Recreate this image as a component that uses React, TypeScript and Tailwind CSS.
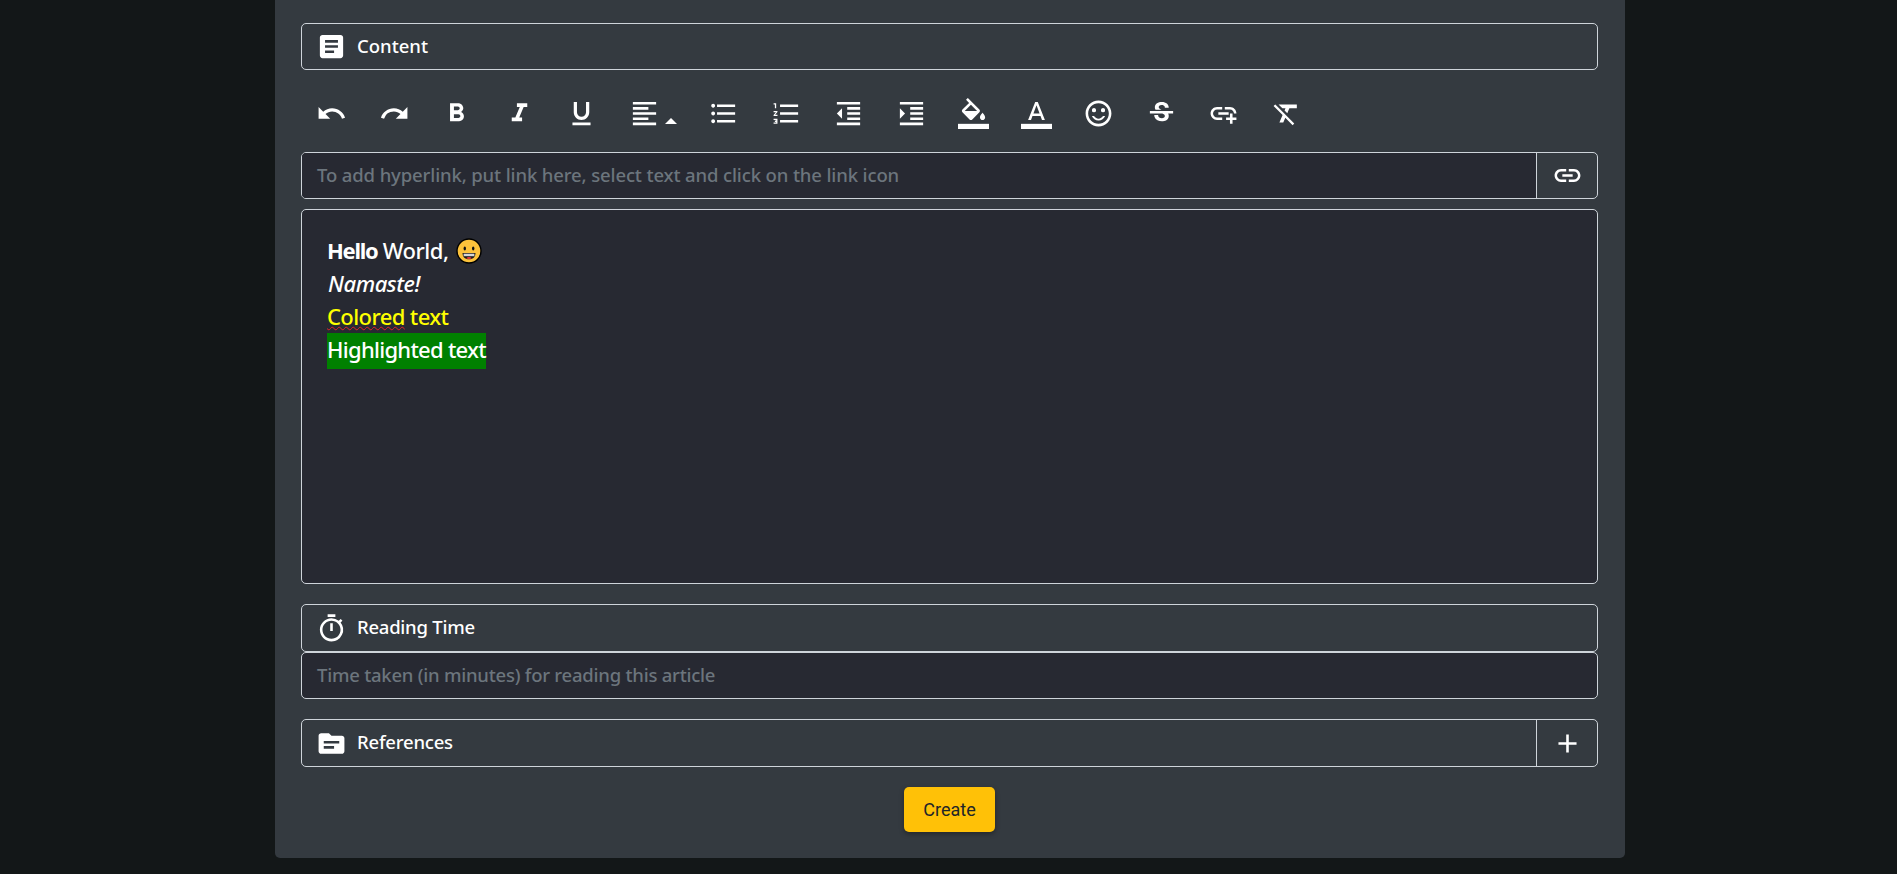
import React from "react";
import type { IconType } from "react-icons";
import {
  MdUndo, MdRedo, MdFormatBold, MdFormatItalic, MdFormatUnderlined, MdFormatAlignLeft,
  MdFormatListBulleted, MdFormatListNumbered, MdFormatIndentDecrease, MdFormatIndentIncrease,
  MdStrikethroughS, MdAddLink, MdFormatClear,
  MdArticle, MdLink, MdOutlineTimer, MdSource, MdAdd, MdSentimentSatisfiedAlt,
} from "react-icons/md";

type IconLike = IconType | ((props: { className?: string }) => React.JSX.Element);

function FillIcon({ className }: { className?: string }) {
  return (
    <svg viewBox="0 0 24 24" fill="currentColor" className={className}>
      <path d="M16.560 8.940 7.620 0 6.210 1.410l2.380 2.380-5.150 5.150c-.59.59-.59 1.540 0 2.120l5.500 5.500c.29.29.68.44 1.060.44s.77-.15 1.060-.44l5.500-5.500c.59-.58.59-1.530 0-2.120zM5.210 10 10 5.210 14.790 10H5.210zM19 11.500s-2 2.170-2 3.500c0 1.100.9 2 2 2s2-.9 2-2c0-1.330-2-3.500-2-3.500z" />
      <path d="M0 20h24v4H0z" />
    </svg>
  );
}

function TextColorIcon({ className }: { className?: string }) {
  return (
    <svg viewBox="0 0 24 24" fill="currentColor" className={className}>
      <path d="M11 3 5.500 17h2.250l1.120-3h6.250l1.120 3h2.250L13 3h-2zm-1.380 9L12 5.670 14.380 12H9.620z" />
      <path d="M0 20h24v4H0z" />
    </svg>
  );
}

const before: [string, IconLike][] = [
  ["Undo", MdUndo], ["Redo", MdRedo], ["Bold", MdFormatBold],
  ["Italic", MdFormatItalic], ["Underline", MdFormatUnderlined],
];
const after: [string, IconLike][] = [
  ["Bulleted list", MdFormatListBulleted], ["Numbered list", MdFormatListNumbered],
  ["Decrease indent", MdFormatIndentDecrease], ["Increase indent", MdFormatIndentIncrease],
  ["Highlight", FillIcon], ["Text color", TextColorIcon],
  ["Emoji", MdSentimentSatisfiedAlt], ["Strikethrough", MdStrikethroughS],
  ["Add link", MdAddLink], ["Clear formatting", MdFormatClear],
];

function Tool({ label, Icon }: { label: string; Icon: IconLike }) {
  return (
    <button aria-label={label} className="flex h-[47px] w-[62.55px] shrink-0 items-center justify-center">
      <Icon className="size-[31px]" />
    </button>
  );
}

function Heading({ Icon, text, className, children }: { Icon: IconLike; text: string; className: string; children?: React.ReactNode }) {
  return (
    <div className={`flex items-stretch rounded-[5px] border border-[#ced4da] ${className}`}>
      <div className="flex flex-1 items-center pl-[14px]">
        <Icon className="size-[31px]" />
        <span className="ml-[10px] pb-[2px] text-[18.5px] font-medium">{text}</span>
      </div>
      {children}
    </div>
  );
}

function Grin() {
  return (
    <svg viewBox="0 0 26 26" className="ml-[7px] size-[26px]">
      <circle cx="13" cy="13" r="12" fill="#fcc23b" stroke="#000" strokeWidth="1.4" />
      <ellipse cx="8.800" cy="10.500" rx="1.200" ry="2" fill="#111" />
      <ellipse cx="17.200" cy="10.500" rx="1.200" ry="2" fill="#111" />
      <path d="M6.500 15h13c0 4-2.700 6.300-6.500 6.300S6.500 19 6.500 15z" fill="#1b1b1b" />
      <path d="M7.600 15.700h10.800v2.500H7.600z" fill="#d5d5d5" />
      <path d="M10.200 20.200c1.500-1.500 4.100-1.500 5.600 0-1.500 1-4.100 1-5.600 0z" fill="#ea3a3a" />
    </svg>
  );
}

export default function App() {
  return (
    <div className="flex h-[874px] justify-center overflow-hidden bg-[#131718] font-['Noto_Sans',sans-serif] text-white">
      <main className="ml-[3px] flex h-[858px] w-[1350px] flex-col rounded-b-[5px] bg-[#343a40] pl-[26px] pr-[27px] pt-[23px]">
        <Heading Icon={MdArticle} text="Content" className="h-[47px]" />
        <div className="-ml-[0.5px] mt-[20px] flex h-[47px] items-center">
          {before.map(([l, I]) => <Tool key={l} label={l} Icon={I} />)}
          <button aria-label="Align" className="flex h-[47px] w-[79.1px] shrink-0 items-center pl-[15.7px]">
            <MdFormatAlignLeft className="size-[31px]" />
            <svg viewBox="0 0 12 6" className="ml-[5px] mt-[15px] h-[6px] w-[12px]"><path d="M0 6 6 0l6 6z" fill="currentColor" /></svg>
          </button>
          {after.map(([l, I]) => <Tool key={l} label={l} Icon={I} />)}
        </div>
        <div className="mt-[15px] flex h-[47px] rounded-[5px] border border-[#ced4da]">
          <div className="flex flex-1 items-center rounded-l-[4px] bg-[#272932] pb-[2px] pl-[15px] text-[18.5px] font-medium tracking-[-0.13px] text-[#6c757d]">
            <span>To add hyperlink, put link here, select text and click on the link icon</span>
          </div>
          <button aria-label="Link" className="flex w-[61px] items-center justify-center border-l border-[#ced4da]"><MdLink className="size-[31px]" /></button>
        </div>
        <div className="mt-[10px] h-[375px] rounded-[5px] border border-[#ced4da] bg-[#272932] px-[25px] pt-[24px] text-[22px] font-medium leading-[33px] tracking-[-0.6px]">
          <div className="flex h-[33px] items-center"><span><b className="tracking-[-1.25px]">Hello</b> <span className="tracking-[-0.45px]">World,</span></span><Grin /></div>
          <div className="h-[33px] pl-px tracking-[-0.45px]"><i>Namaste!</i></div>
          <div className="h-[33px] text-[#ff0]"><span className="underline decoration-[#e0202c] decoration-wavy decoration-1">Colored</span> <span>text</span></div>
          <div className="flex tracking-[-0.72px]"><span className="h-[36px] bg-[#008000] leading-[33px]">Highlighted text</span></div>
        </div>
        <Heading Icon={MdOutlineTimer} text="Reading Time" className="mt-[20px] h-[48px] tracking-[-0.25px]" />
        <div className="flex h-[47px] items-center rounded-[5px] border border-[#ced4da] bg-[#272932] pb-[2px] pl-[15px] text-[18.5px] font-medium tracking-[-0.24px] text-[#6c757d]">
          <span>Time taken (in minutes) for reading this article</span>
        </div>
        <Heading Icon={MdSource} text="References" className="mt-[20px] h-[48px] tracking-[-0.2px]">
          <button aria-label="Add" className="flex w-[61px] items-center justify-center border-l border-[#ced4da]"><MdAdd className="size-[31px]" /></button>
        </Heading>
        <div className="mt-[20px] flex justify-center">
          <button className="h-[45px] w-[91px] rounded-[5px] bg-[#ffc107] font-['Roboto',sans-serif] text-[18px] text-[#212529] shadow-[0_2px_5px_rgba(0,0,0,0.35)]">Create</button>
        </div>
      </main>
    </div>
  );
}
